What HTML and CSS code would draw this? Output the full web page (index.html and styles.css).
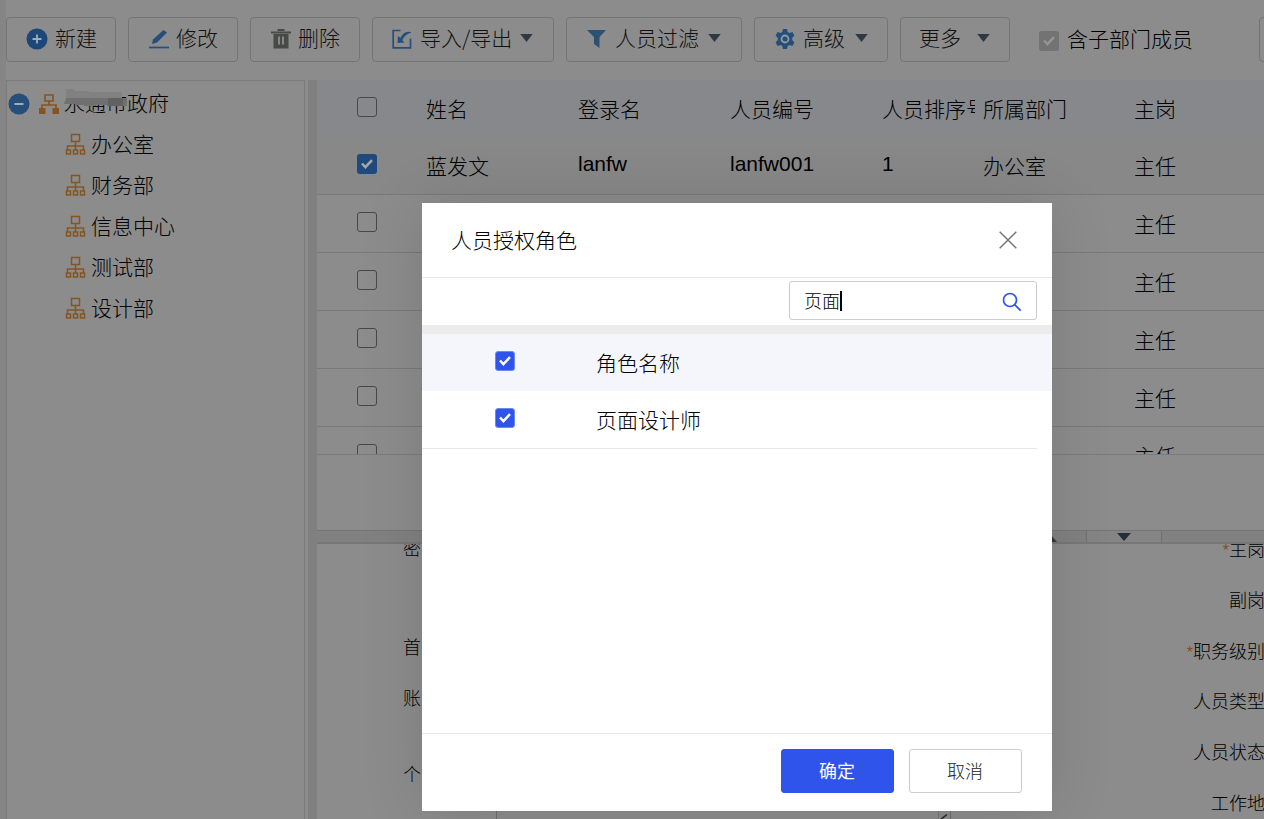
FILE: index.html
```html
<!DOCTYPE html>
<html lang="zh-CN">
<head>
<meta charset="utf-8">
<title>人员管理</title>
<link rel="stylesheet" href="styles.css">
</head>
<body>
<svg class="defs" width="0" height="0">
  <symbol id="tick" viewBox="0 0 20 20"><path d="M5 9.5l3.4 3.6L15 6.2" fill="none" stroke="currentColor" stroke-width="2.5"/></symbol>
  <symbol id="caret" viewBox="0 0 14 9"><path d="M0 0h14L7 9z" fill="#2d3a45"/></symbol>
  <symbol id="org" viewBox="0 0 21 22"><path d="M6.5 1.5h8v7h-8zM10.500 8.500v4.500M2.500 17v-4h16v4M10.500 13v4M1.500 17h4v4h-4zM8.500 17h4v4h-4zM15.500 17h4v4h-4z" fill="none" stroke="#855420" stroke-width="1.500"/></symbol>
</svg>
<div class="page">
  <header class="toolbar">
    <button class="tool"><svg width="22" height="22" viewBox="0 0 22 22"><circle cx="11" cy="11" r="10.500" fill="#1d4679"/><path d="M11 6.500v9M6.500 11h9" stroke="#a3adb9" stroke-width="1.800"/></svg><span>新建</span></button>
    <button class="tool tool-edit"><svg width="20" height="20" viewBox="0 0 20 20"><path d="M0 18.500h20" stroke="#254f7a" stroke-width="1.700"/><path d="M3 15l1-4.500L14.500 1 18 3.500 8 13.500z" fill="#254f7a"/></svg><span>修改</span></button>
    <button class="tool tool-del"><svg width="20" height="20" viewBox="0 0 20 20"><path d="M6.500 1h7M0 3.500h20" stroke="#464b46" stroke-width="2"/><path d="M2.500 5h15v14.500h-15z" fill="#464b46"/><path d="M8 7.500v8M12 7.500v8" stroke="#858985" stroke-width="2"/></svg><span>删除</span></button>
    <button class="tool tool-io"><svg width="20" height="20" viewBox="0 0 20 20"><path d="M8.500 1.500H1.200v17.300h17.300V9.500" fill="none" stroke="#254f7a" stroke-width="1.700"/><path d="M6 7l-.5 7 7-.5-2.200-2.200C12 8 14 5 19.500 3.500 15 1 10.500 4.500 8.500 9z" fill="#254f7a"/></svg><span>导入/导出</span><svg class="caret" width="13" height="8"><use href="#caret"/></svg></button>
    <button class="tool tool-filter"><svg width="19" height="20" viewBox="0 0 19 20"><path d="M0 1h19l-6.500 7v11L7 15V8z" fill="#2d5173"/></svg><span>人员过滤</span><svg class="caret" width="13" height="8"><use href="#caret"/></svg></button>
    <button class="tool tool-adv"><svg width="20" height="22" viewBox="0 0 20 22"><path d="M8 1h4l.7 3 1.700.9 3-.9 2 3.500L17.200 10v2l2.200 2.500-2 3.500-3-.9-1.700.9-.7 3H8l-.7-3-1.700-.9-3 .9-2-3.500L2.800 12v-2L.6 7.500 2.600 4l3 .9L7.300 4z" fill="#254f7a"/><circle cx="10" cy="11" r="3.500" fill="#254f7a" stroke="#919ba5" stroke-width="1.800"/></svg><span>高级</span><svg class="caret" width="13" height="8"><use href="#caret"/></svg></button>
    <button class="tool tool-more"><span>更多</span><svg class="caret" width="13" height="8"><use href="#caret"/></svg></button>
    <label class="include"><span class="check check-off"><svg><use href="#tick"/></svg></span><span>含子部门成员</span></label>
    <span class="next-tool"></span>
  </header>
  <main class="main">
    <aside class="tree">
      <div class="root"><svg class="minus" width="22" height="22" viewBox="0 0 22 22"><circle cx="11" cy="11" r="10.500" fill="#264f7b"/><path d="M6.500 11h9" stroke="#a3adb9" stroke-width="2"/></svg><svg width="20" height="20" viewBox="0 0 20 20"><path d="M6 1h8v6H6zM10 7v4M3 15v-4h14v4" fill="none" stroke="#855420" stroke-width="1.600"/><path d="M0 14h6.500v6H0zM13.500 14H20v6h-6.500z" fill="#855420"/></svg><span class="root-name">永通市政府<svg class="mosaic" width="63" height="21" viewBox="0 0 63 21"><path d="M2 0h8v2h15v1h33v6H2z" fill="#818181"/><path d="M2 9h61v8H43v-1H32v1H20v-1h-8v-1H0z" fill="#707070"/><path d="M44 9h15v8H44z" fill="#616161"/></svg></span></div>
      <div class="node"><svg width="21" height="22"><use href="#org"/></svg>办公室</div>
      <div class="node"><svg width="21" height="22"><use href="#org"/></svg>财务部</div>
      <div class="node"><svg width="21" height="22"><use href="#org"/></svg>信息中心</div>
      <div class="node"><svg width="21" height="22"><use href="#org"/></svg>测试部</div>
      <div class="node"><svg width="21" height="22"><use href="#org"/></svg>设计部</div>
    </aside>
    <div class="vsplit"></div>
    <section class="content">
      <div class="grid">
        <div class="row head"><span class="pick"><span class="check"></span></span><span>姓名</span><span>登录名</span><span>人员编号</span><span>人员排序号</span><span>所属部门</span><span>主岗</span></div>
        <div class="row chosen"><span class="pick"><span class="check check-on"><svg><use href="#tick"/></svg></span></span><span>蓝发文</span><span class="latin">lanfw</span><span class="latin">lanfw001</span><span class="latin">1</span><span>办公室</span><span>主任</span></div>
        <div class="row"><span class="pick"><span class="check"></span></span><span class="post">主任</span></div>
        <div class="row"><span class="pick"><span class="check"></span></span><span class="post">主任</span></div>
        <div class="row"><span class="pick"><span class="check"></span></span><span class="post">主任</span></div>
        <div class="row"><span class="pick"><span class="check"></span></span><span class="post">主任</span></div>
        <div class="row"><span class="pick"><span class="check"></span></span><span class="post">主任</span></div>
      </div>
      <div class="pager"></div>
      <div class="hsplit"><svg class="up" width="14" height="8"><path d="M0 8h14L7 0z" fill="#2d3a45"/></svg><span class="collapse"><svg width="14" height="8"><path d="M0 0h14L7 8z" fill="#252f3c"/></svg></span></div>
      <div class="form">
        <div class="labels left"><span class="l1">密</span><span class="l2">首</span><span class="l3">账</span><span class="l4">个</span></div>
        <div class="area"><div class="textarea"><div class="bar"><svg width="10" height="6" viewBox="0 0 10 6"><path d="M2 6l6-4.500" stroke="#222" stroke-width="1.500"/></svg></div></div></div>
        <div class="labels right"><span><i>*</i>主岗</span><span>副岗</span><span><i>*</i>职务级别</span><span>人员类型</span><span>人员状态</span><span>工作地</span></div>
      </div>
    </section>
  </main>
</div>
<div class="dialog">
  <div class="title"><span>人员授权角色</span><svg width="18" height="18" viewBox="0 0 18 18"><path d="M.7.7l16.600 16.600M17.300.7L.7 17.300" stroke="#777" stroke-width="1.500"/></svg></div>
  <div class="search"><div class="field"><span class="typed">页面</span><svg width="20" height="20" viewBox="0 0 20 20"><circle cx="8" cy="8" r="6.500" fill="none" stroke="#2f54eb" stroke-width="1.700"/><path d="M12.700 12.700l6 6" stroke="#2f54eb" stroke-width="1.800"/></svg></div></div>
  <div class="role role-head"><span class="check check-blue"><svg><use href="#tick"/></svg></span><span>角色名称</span></div>
  <div class="role"><span class="check check-blue"><svg><use href="#tick"/></svg></span><span>页面设计师</span></div>
  <div class="blank"></div>
  <div class="actions"><button class="ok">确定</button><button class="cancel">取消</button></div>
</div>
</body>
</html>
```
FILE: styles.css
```css
* { box-sizing: border-box; }
body { margin: 0; font: 300 21px/30px "Noto Sans CJK SC", sans-serif; color: #000; }
button { font: inherit; }
svg { flex: none; display: block; }
.defs { position: absolute; }
.page { width: 1264px; height: 819px; overflow: hidden; display: flex; flex-direction: column; background: #8c8c8c; border-left: 6px solid #858585; }

.toolbar { height: 80px; flex: none; display: flex; gap: 12px; padding-top: 17px; overflow: hidden; }
.tool { flex: none; display: flex; align-items: center; width: 110px; height: 45px; padding: 0 0 1px 19px; gap: 7px; background: none; border: 1px solid #757575; border-radius: 4px; color: #111; white-space: nowrap; }
.tool .caret { margin-left: 2px; margin-top: -2px; }
.tool-edit { padding-left: 20px; }
.tool-del { padding-left: 20px; }
.tool-io { width: 182px; gap: 8px; }
.tool-io .caret { margin-left: 0; }
.tool-filter { width: 176px; padding-left: 20px; gap: 9px; }
.tool-filter .caret { margin-left: 0; }
.tool-adv { width: 134px; gap: 8px; padding-left: 20px; }
.tool-more { padding-left: 18px; }
.tool-more .caret { margin-left: 9px; }
.tool > svg:first-child { margin-top: 0; }
.tool > span { margin-top: -4px; }
.include { flex: none; display: flex; align-items: center; height: 45px; margin-left: 17px; gap: 8px; white-space: nowrap; }
.include > span:last-child { margin-top: -4px; }
.next-tool { flex: none; width: 80px; height: 45px; margin-left: 54px; border: 1px solid #757575; border-radius: 4px; }

.check { flex: none; display: block; width: 20px; height: 20px; border: 1.500px solid #454a45; border-radius: 3px; }
.check svg { width: 20px; height: 20px; }
.check-on { border: 0; background: #1f4a7e; color: #a8a8a8; }
.check-off { border: 0; background: #737373; color: #949494; margin-top: 2px; }
.check-blue { border: 1px solid #6f88f0; background: #2f54eb; color: #fff; }
.check-blue svg { margin: -1px; }

.main { flex: 1; min-height: 0; display: flex; }
.tree { flex: none; width: 299px; border: 1px solid #7b7b7b; border-bottom: 0; padding-top: 2px; }
.root { display: flex; align-items: center; height: 41px; padding-left: 1px; gap: 9px; }
.root-name { position: relative; margin-left: -4px; margin-top: -3px; }
.mosaic { position: absolute; left: 0; top: 2px; }
.node { display: flex; align-items: center; gap: 5px; height: 41.200px; padding: 0 0 4px 58px; }
.node svg { margin-top: 2px; }
.vsplit { flex: none; width: 9px; margin-left: 3px; background: #808080; }
.content { flex: 1; min-width: 0; display: flex; flex-direction: column; }

.grid { flex: none; height: 375px; overflow: hidden; border-bottom: 1px solid #7b7b7b; }
.row { display: grid; grid-template-columns: 101px 152px 152px 152px 101px 152px 1fr; height: 58px; border-bottom: 1px solid #797979; }
.row > span { padding: 13px 0 0 8px; overflow: hidden; white-space: nowrap; }
.row > span:last-child { padding-left: 7px; }
.row > .pick { padding: 17px 0 0 40px; }
.row > .post { grid-column: 7; }
.head { height: 57px; border-bottom: 0; background: #86888b; }
.row.chosen { background: #888; }
.row > .latin { padding-top: 12px; font-family: "Liberation Sans", Arial, sans-serif; }
.pager { flex: none; height: 75px; }
.hsplit { flex: none; height: 14px; display: flex; background: #818181; border-top: 1px solid #747474; border-bottom: 2px solid #777; }
.up { margin: 3px 29px 0 726px; }
.collapse { width: 76px; border: solid #707070; border-width: 0 1px; background: #858585; }
.collapse svg { margin: 2px 0 0 30px; }

.form { flex: 1; min-height: 0; display: flex; overflow: hidden; font-size: 18px; }
.labels { flex: none; display: flex; flex-direction: column; }
.labels span { flex: none; height: 30px; }
.left { width: 105px; padding-left: 86px; margin-right: 74px; }
.l1 { margin-top: -12px; }
.l2 { margin-top: 69px; }
.l3 { margin-top: 21px; }
.l4 { margin-top: 46px; }
.area { flex: none; width: 455px; padding-top: 220px; }
.textarea { height: 55px; border: 1px solid #6c6c6c; border-bottom: 0; display: flex; justify-content: flex-end; }
.bar { width: 12px; border-left: 1px solid #777; display: flex; align-items: flex-end; }
.right { width: 314px; align-items: flex-end; gap: 20.800px; margin-top: -11px; }
.right span { white-space: nowrap; }
.right i { color: #8c4b10; font-style: normal; font-family: "Liberation Sans", sans-serif; font-size: 16px; line-height: 16px; }

.dialog { position: absolute; left: 422px; top: 203px; width: 630px; height: 608px; display: flex; flex-direction: column; background: #fff; box-shadow: 0 0 60px rgba(0, 0, 0, .12); }
.title { height: 75px; flex: none; display: flex; justify-content: space-between; align-items: center; padding: 0 35px 0 29px; border-bottom: 1px solid #e8e8e8; }
.title span { margin-top: -2px; }
.search { height: 56px; flex: none; display: flex; justify-content: flex-end; padding: 3px 15px 0; border-bottom: 9px solid #ececec; }
.field { width: 248px; height: 39px; display: flex; justify-content: space-between; align-items: center; padding: 0 14px; border: 1px solid #ccc; border-radius: 3px; font-size: 18px; }
.field svg { margin-top: 3px; }
.typed { height: 20px; line-height: 18px; border-right: 2px solid #000; }
.role { flex: none; display: flex; height: 58px; margin-right: 15px; border-bottom: 1px solid #e8e8e8; padding: 13px 0 0 73px; gap: 81px; }
.role .check { margin-top: 4px; }
.role-head { height: 57px; margin-right: 0; border-bottom: 0; background: #f4f6fb; }
.blank { flex: 1; }
.actions { height: 78px; flex: none; display: flex; justify-content: flex-end; gap: 15px; padding: 15px 30px; border-top: 1px solid #e8e8e8; font-size: 18px; }
.actions button { width: 113px; height: 44px; border: 1px solid #ccc; border-radius: 3px; background: #fff; color: #222; padding: 0 1px 3px 0; }
.actions .ok { background: #2f54eb; border-color: #2f54eb; color: #fff; font-weight: 400; }
```
